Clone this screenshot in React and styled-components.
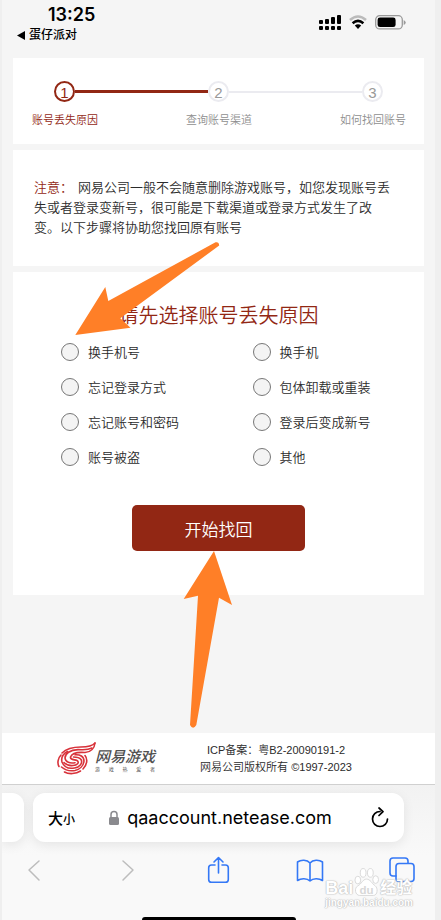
import React from 'react';
import styled, { createGlobalStyle } from 'styled-components';

const red = '#922714';
const blue = '#3478f6';
const orange = '#ff7f27';
const cjk = '"Liberation Sans", "Noto Sans CJK SC", sans-serif';
const system = 'Inter, "Noto Sans CJK SC", sans-serif';

const GlobalStyle = createGlobalStyle`
  * { box-sizing: border-box; }
  body { margin: 0; background: #efefef; color: #2b2b2b; font-family: ${cjk}; font-weight: 350; }
  button, input { font: inherit; color: inherit; }
  button { border: 0; padding: 0; background: none; cursor: pointer; }
`;

const Page = styled.div`
  position: relative;
  display: flex;
  flex-direction: column;
  min-height: 100vh;
  margin: 0 6px 0 2px;
  background: #f5f5f5;
  overflow: hidden;
`;

const StatusBar = styled.header`
  display: flex;
  justify-content: space-between;
  height: 58px;
  padding: 4px 29px 0 14px;
  color: #000;
  font-family: ${system};
`;

const Clock = styled.div`
  padding-left: 32px;
  font-size: 18px;
  font-weight: 600;
  line-height: 21px;
`;

const BackLink = styled.a`
  display: flex;
  align-items: center;
  gap: 4px;
  color: #000;
  font-size: 12px;
  font-weight: 500;
  line-height: 20px;
  text-decoration: none;
`;

const StatusIcons = styled.div`
  display: flex;
  gap: 8px;
  padding-top: 10px;
`;

const Main = styled.main`
  display: flex;
  flex: 1;
  flex-direction: column;
  gap: 6px;
  padding: 0 11px;
`;

const Card = styled.section`
  background: #fff;
`;

const StepsCard = styled(Card)`
  padding: 23px 18px 15px 19px;
`;

const Track = styled.div`
  display: flex;
  align-items: center;
  padding: 0 23px 0 22px;
`;

const StepDot = styled.span`
  width: 21px;
  height: 21px;
  border: 2px solid ${p => (p.$active ? red : '#ebebf0')};
  border-radius: 50%;
  color: ${p => (p.$active ? red : '#999')};
  font-size: 15px;
  line-height: 19px;
  text-align: center;
`;

const StepLine = styled.span`
  flex: 1;
  height: ${p => (p.$active ? 3 : 2)}px;
  background: ${p => (p.$active ? red : '#ebebf0')};
`;

const StepLabels = styled.ol`
  display: flex;
  justify-content: space-between;
  margin: 9px 0 0;
  padding: 0;
  list-style: none;
  font-size: 11px;
  line-height: 18px;
`;

const StepLabel = styled.li`
  color: ${p => (p.$active ? red : '#8f8f8f')};
`;

const NoticeCard = styled(Card)`
  padding: 28px 30px 28px 21px;
`;

const Notice = styled.p`
  margin: 0;
  font-size: 13px;
  line-height: 20px;
`;

const Warning = styled.strong`
  margin-right: 5px;
  color: ${red};
  font-weight: inherit;
`;

const FormCard = styled.form`
  display: flex;
  flex-direction: column;
  align-items: center;
  padding: 30px 0 44px;
  background: #fff;
`;

const Title = styled.h1`
  margin: 0;
  color: ${red};
  font-size: 20px;
  font-weight: inherit;
  line-height: 28px;
`;

const Options = styled.div`
  display: grid;
  grid-template-columns: 191fr 171fr;
  align-self: stretch;
  margin-top: 4px;
  padding-left: 48px;
`;

const Option = styled.label`
  display: flex;
  align-items: center;
  gap: 9px;
  height: 35px;
  font-size: 13px;
`;

const Radio = styled.input`
  appearance: none;
  width: 18px;
  height: 18px;
  margin: 0;
  border: 1px solid #777;
  border-radius: 50%;
  background: #f4f4f4;
  &:checked { background: ${red}; }
`;

const Submit = styled.button`
  width: 42%;
  height: 46px;
  margin-top: 31px;
  border-radius: 5px;
  background: ${red};
  color: #fff;
  font-size: 17px;
`;

const Footer = styled.footer`
  display: flex;
  align-items: center;
  height: 51px;
  padding-left: 53px;
  background: #fff;
`;

const Brand = styled.div`
  display: flex;
  color: #505050;
`;

const BrandWords = styled.div`
  display: flex;
  flex-direction: column;
  width: 60px;
  margin-left: -2px;
  padding-top: 6px;
`;

const BrandName = styled.span`
  font-size: 15px;
  font-style: italic;
  font-weight: 500;
  line-height: 18px;
  white-space: nowrap;
`;

const BrandMotto = styled.span`
  display: flex;
  justify-content: space-between;
  font-size: 5px;
  font-weight: 400;
  line-height: 6px;
`;

const Legal = styled.div`
  flex: 1;
  padding-right: 38px;
  font-size: 11px;
  line-height: 17px;
  text-align: center;
`;

const BrowserBar = styled.div`
  display: flex;
  flex-direction: column;
  height: 136px;
  border-top: 1px solid #d0d0d0;
  background: linear-gradient(#f2f2f2, #f9f9f9 70px);
  color: #000;
  font-family: ${system};
  font-weight: 400;
`;

const AddressRow = styled.div`
  display: flex;
  gap: 9px;
  padding: 8px 31px 0 0;
`;

const PreviousTab = styled.div`
  width: 22px;
  border-radius: 0 12px 12px 0;
  background: #fff;
  box-shadow: 0 3px 12px rgba(0, 0, 0, 0.08);
`;

const AddressField = styled.div`
  display: flex;
  flex: 1;
  align-items: center;
  height: 49px;
  padding: 0 15px;
  border-radius: 12px;
  background: #fff;
  box-shadow: 0 3px 12px rgba(0, 0, 0, 0.08);
`;

const TextSize = styled.button`
  font-size: 15px;
  font-weight: 500;
`;

const SmallGlyph = styled.span`
  font-size: 12px;
`;

const Address = styled.div`
  display: flex;
  flex: 1;
  align-items: center;
  justify-content: center;
  gap: 7px;
  padding-right: 5px;
  font-size: 18px;
`;

const IconButton = styled.button`
  display: flex;
  justify-content: center;
  color: ${p => p.$color || '#000'};
`;

const ToolButton = styled(IconButton)`
  width: 28px;
`;

const Toolbar = styled.nav`
  display: flex;
  justify-content: space-between;
  align-items: center;
  padding: 14px 19px 0;
`;

const HomeIndicator = styled.div`
  align-self: center;
  width: 154px;
  height: 3px;
  margin-top: auto;
  border-radius: 3px 3px 0 0;
  background: #000;
`;

const Pointer = styled.svg`
  position: absolute;
  left: ${p => p.$left}px;
  top: ${p => p.$top}px;
  fill: ${orange};
  pointer-events: none;
`;

const Watermark = styled.div`
  position: absolute;
  right: 22px;
  bottom: 11px;
  color: #fff;
  font-weight: 700;
  pointer-events: none;
  text-shadow: 0 0 1px #bbb, 0 0 1px #bbb, 0 0 2px #ccc;
`;

const WatermarkRow = styled.div`
  display: flex;
  align-items: flex-end;
  gap: 1px;
  font-size: ${p => p.$size}px;
  line-height: ${p => p.$line}px;
`;

const Wide = styled.span`
  font-size: 16px;
`;

const Stroked = ({ children, width, height, stroke = 2 }) => (
  <svg width={width} height={height} viewBox={`0 0 ${width} ${height}`} fill="none"
    stroke="currentColor" strokeWidth={stroke} strokeLinecap="round" strokeLinejoin="round" aria-hidden="true">
    {children}
  </svg>
);

const steps = ['账号丢失原因', '查询账号渠道', '如何找回账号'];
const reasons = ['换手机号', '换手机', '忘记登录方式', '包体卸载或重装', '忘记账号和密码', '登录后变成新号', '账号被盗', '其他'];

const Signal = () => (
  <svg width="22" height="17" aria-label="信号">
    {[0, 1, 2, 3].map(i => (
      <g key={i}>
        <rect x={i * 6} y={[6, 5, 3, 1][i]} width="4" height={[4, 5, 7, 9][i]} rx="1" />
        <rect x={i * 6} y="12" width="4" height="4" rx="1" />
      </g>
    ))}
  </svg>
);

const Wifi = () => (
  <svg width="18" height="17" viewBox="0 0 18 17" fill="none" aria-label="无线网络">
    <path d="M1 6Q9-1 17 6" stroke="#bbb" strokeWidth="2.6" />
    <path d="M3.6 9.2Q9 4.6 14.4 9.2" stroke="#000" strokeWidth="2.6" />
    <path d="M5.8 11.6Q9 9 12.2 11.6L9 15Z" fill="#000" />
  </svg>
);

const Battery = () => (
  <svg width="31" height="17" viewBox="0 0 31 17" aria-label="电量">
    <rect x=".7" y="1.7" width="26.6" height="13.2" rx="4" fill="none" stroke="#999" strokeWidth="1.3" />
    <rect x="2.6" y="3.6" width="18" height="9.5" rx="2.4" />
    <path d="M28.7 6v5q2-1 2-2.5T28.7 6" fill="#999" />
  </svg>
);

const Flame = () => (
  <svg width="42" height="33" viewBox="0 0 42 33" fill="none" stroke="#d8323a" strokeWidth="1.6" strokeLinecap="round" aria-hidden="true">
    <path d="M40 1C37 4.500 32 5 26 5C17 5 11 7 7 11" />
    <path d="M40 1C39.500 6 36 10 30 10.500C24 10 17 11 15.500 15C15 18 19 17.500 22 18.500C25 20.500 22 23.500 18 23.500C14 24 11 22.500 9 20.500" />
    <path d="M37 6C32 8.500 28 7.600 23 7.600C15 8 10 11.500 10 16C10.500 20.500 15 21.500 20 20.700" />
    <path d="M6 13C3 16 2 21 4 24.500" />
    <path d="M12.500 9.500C8 12 6 16 7 20C9 25 14 27 19.500 26C25 25 28 21 26 17.500C24 15 21 15 18.500 15" />
    <path d="M20 12.800C25 12.300 29 14.500 29 19C28.500 24 24.500 27.500 20 28.500C15 29.400 10 28 6.500 25" />
    <path d="M30 13.500C33 17 32 23 28 27M25.500 29C21 32 14 32.500 9.500 30" />
  </svg>
);

const PawText = styled.text`
  fill: #d8d8d8;
  stroke: none;
  font-size: 12px;
  text-anchor: middle;
  text-shadow: none;
`;

const Paw = () => (
  <svg width="25" height="30" viewBox="0 0 26 30" fill="#fff" stroke="#d8d8d8" strokeWidth="1" aria-hidden="true">
    <ellipse cx="4" cy="13" rx="3" ry="4" />
    <ellipse cx="9.500" cy="5.500" rx="3" ry="4.500" />
    <ellipse cx="17" cy="5.500" rx="3" ry="4.500" />
    <ellipse cx="22.500" cy="12.500" rx="3" ry="4" />
    <path d="M13 12C9 12 8 17 4 19S1 29 6 29H20C25 29 25 21 22 19S17 12 13 12Z" />
    <PawText x="13" y="27">du</PawText>
  </svg>
);

export default function App() {
  return (
    <>
      <GlobalStyle />
      <Page>
        <StatusBar>
          <div>
            <Clock>13:25</Clock>
            <BackLink href="#back">
              <svg width="9" height="9" aria-hidden="true"><path d="M9 0v9L1 4.500Z" /></svg>
              蛋仔派对
            </BackLink>
          </div>
          <StatusIcons><Signal /><Wifi /><Battery /></StatusIcons>
        </StatusBar>
        <Main>
          <StepsCard>
            <Track>
              <StepDot $active>1</StepDot>
              <StepLine $active />
              <StepDot>2</StepDot>
              <StepLine />
              <StepDot>3</StepDot>
            </Track>
            <StepLabels>
              {steps.map((s, i) => <StepLabel key={s} $active={i === 0}>{s}</StepLabel>)}
            </StepLabels>
          </StepsCard>
          <NoticeCard>
            <Notice>
              <Warning>注意：</Warning>网易公司一般不会随意删除游戏账号，如您发现账号丢失或者登录变新号，很可能是下载渠道或登录方式发生了改变。以下步骤将协助您找回原有账号
            </Notice>
          </NoticeCard>
          <FormCard onSubmit={e => e.preventDefault()}>
            <Title>请先选择账号丢失原因</Title>
            <Options>
              {reasons.map(r => (
                <Option key={r}><Radio type="radio" name="reason" value={r} />{r}</Option>
              ))}
            </Options>
            <Submit type="submit">开始找回</Submit>
          </FormCard>
        </Main>
        <Footer>
          <Brand>
            <Flame />
            <BrandWords>
              <BrandName>网易游戏</BrandName>
              <BrandMotto>{[...'游戏热爱者'].map(c => <span key={c}>{c}</span>)}</BrandMotto>
            </BrandWords>
          </Brand>
          <Legal>
            <div>ICP备案：粤B2-20090191-2</div>
            <div>网易公司版权所有 ©1997-2023</div>
          </Legal>
        </Footer>
        <BrowserBar>
          <AddressRow>
            <PreviousTab />
            <AddressField>
              <TextSize type="button">大<SmallGlyph>小</SmallGlyph></TextSize>
              <Address>
                <svg width="12" height="16" viewBox="0 0 12 16" aria-hidden="true">
                  <rect x="1" y="7" width="10" height="8" rx="1.500" fill="#8a8a8e" />
                  <path d="M3 8V4.500a3 3 0 0 1 6 0V8" fill="none" stroke="#8a8a8e" strokeWidth="1.500" />
                </svg>
                qaaccount.netease.com
              </Address>
              <IconButton type="button" aria-label="刷新">
                <Stroked width={19} height={22} stroke={1.7}>
                  <path d="M10 4.500A7.500 7.500 0 1 0 17.500 12M9 1l4 3.600L9 8.500" />
                </Stroked>
              </IconButton>
            </AddressField>
          </AddressRow>
          <Toolbar>
            <ToolButton type="button" aria-label="后退" $color="#bdbdbd">
              <Stroked width={16} height={28} stroke={1.5}><path d="M12 5L2 14l10 10" /></Stroked>
            </ToolButton>
            <ToolButton type="button" aria-label="前进" $color="#bdbdbd">
              <Stroked width={16} height={28} stroke={1.5}><path d="M4 5l10 9L4 24" /></Stroked>
            </ToolButton>
            <ToolButton type="button" aria-label="分享" $color={blue}>
              <Stroked width={23} height={28} stroke={1.6}>
                <path d="M8 9H4.500A2.800 2.800 0 0 0 1.700 11.800v11.600A2.800 2.800 0 0 0 4.500 26.200h14a2.800 2.800 0 0 0 2.800-2.800V11.800A2.800 2.800 0 0 0 18.500 9H15M11.500 17V2M7 6l4.500-4.500L16 6" />
              </Stroked>
            </ToolButton>
            <ToolButton type="button" aria-label="书签" $color={blue}>
              <Stroked width={28} height={28} stroke={1.6}>
                <path d="M14 7C11 3.500 5 3.500 1.500 6v18.500C5 22 11 22 14 25c3-3 9-3 12.500-.5V6C23 3.500 17 3.500 14 7v18" />
              </Stroked>
            </ToolButton>
            <ToolButton type="button" aria-label="标签页" $color={blue}>
              <Stroked width={28} height={28} stroke={1.6}>
                <path d="M8 20H5a3 3 0 0 1-3-3V5a3 3 0 0 1 3-3h12a3 3 0 0 1 3 3v2" />
                <rect x="8" y="7.500" width="18" height="18" rx="3" />
              </Stroked>
            </ToolButton>
          </Toolbar>
          <HomeIndicator />
        </BrowserBar>
        <Pointer $left={73} $top={241} width="146" height="95" viewBox="75 241 146 95" aria-hidden="true">
          <path d="M75.300 335L105.300 287L108.300 301L215.500 242.300Q219 241.500 219.200 245.500L120.300 318.300L130.500 327.700Z" />
        </Pointer>
        <Pointer $left={181} $top={551} width="50" height="178" viewBox="183 551 50 178" aria-hidden="true">
          <path d="M214 551L183.700 599L198 595.700L190 725Q193 730.500 196.300 725L219 597.700L232 605Z" />
        </Pointer>
        <Watermark aria-hidden="true">
          <WatermarkRow $size={18} $line={18}>Bai<Paw /><Wide>经验</Wide></WatermarkRow>
          <WatermarkRow $size={10} $line={12}>jingyan.baidu.com</WatermarkRow>
        </Watermark>
      </Page>
    </>
  );
}
